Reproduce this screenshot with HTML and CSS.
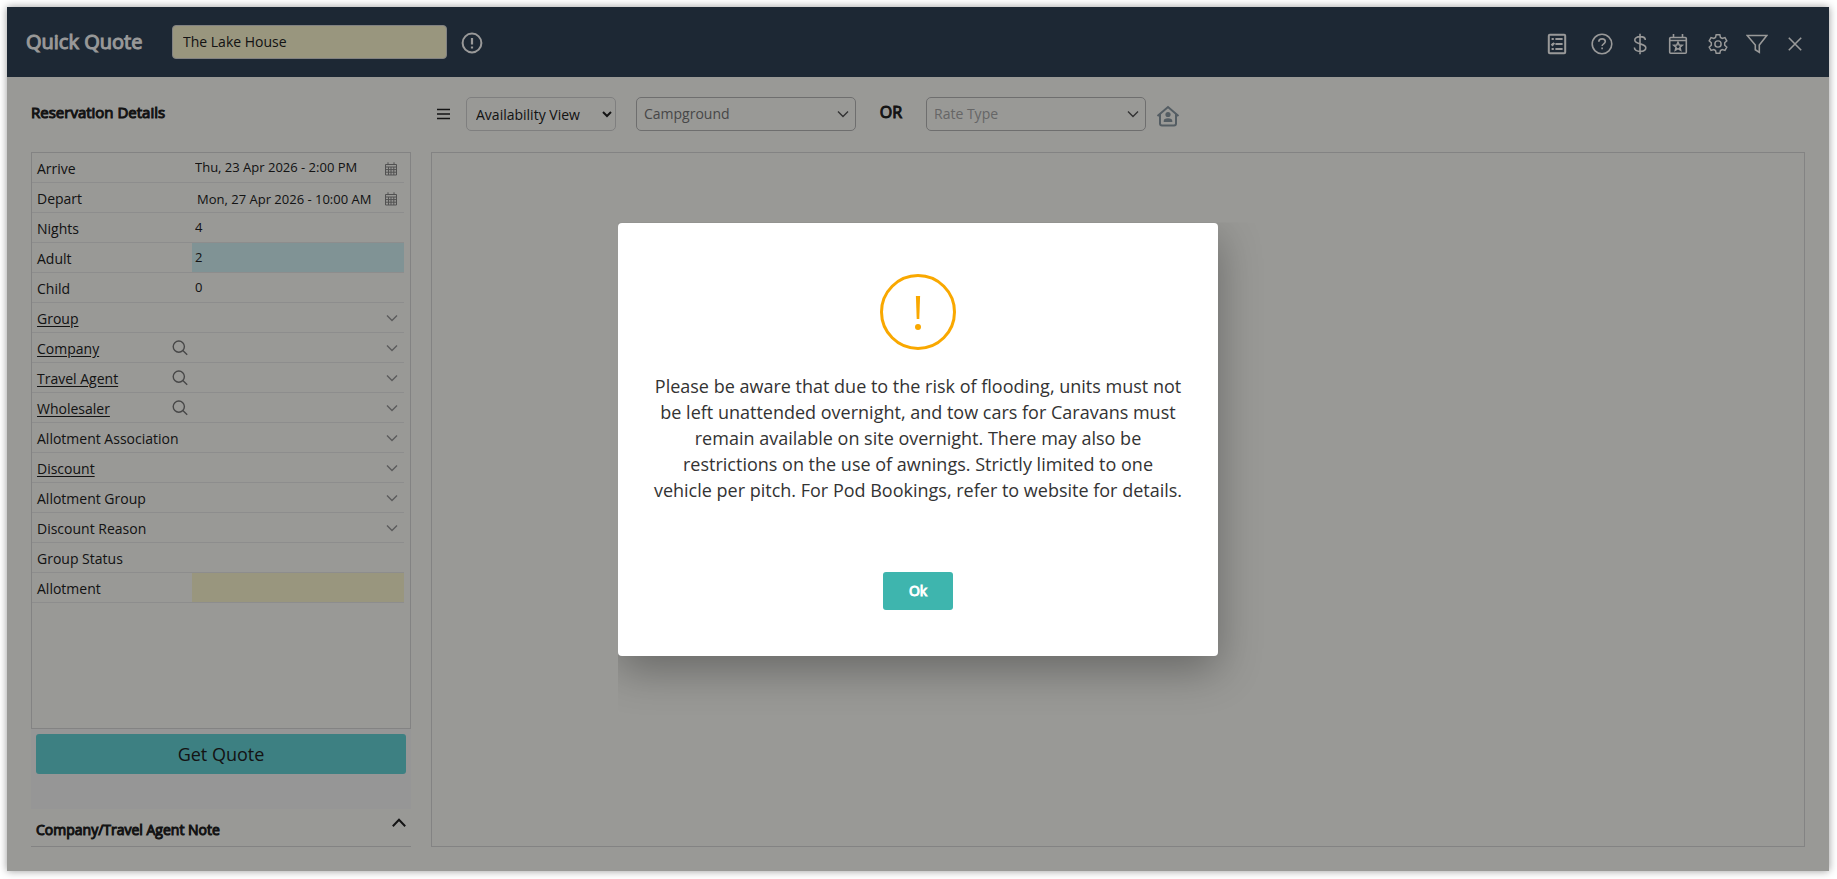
FILE: index.html
```html
<!DOCTYPE html>
<html lang="en">
<head>
    <meta charset="utf-8">
    <title>Quick Quote</title>
    <link rel="stylesheet" href="styles.css">
</head>
<body>

<!-- shared icons -->
<svg class="sprite" aria-hidden="true">
    <symbol id="i-down" viewBox="0 0 12 12"><path d="M1 3.5l5 5 5-5"/></symbol>
    <symbol id="i-search" viewBox="0 0 16 16"><circle cx="6.8" cy="6.6" r="5.6"/><path d="M10.8 10.6l4.4 4.2"/></symbol>
    <symbol id="i-cal" viewBox="0 0 14 14"><path d="M1.5 2.5h11v10.5h-11zM1.5 5h11M1.5 7.6h11M1.5 10.2h11M4.5 5v8M7 5v8M9.8 5v8M4 .3v2.4M10 .3v2.4"/></symbol>
</svg>

<div class="app">
    <header class="topbar">
        <h1>Quick Quote</h1>
        <input class="property" type="text" value="The Lake House" aria-label="Property">
        <button class="icon-btn notice" aria-label="Property notice">
            <svg width="22" height="22" viewBox="0 0 22 22"><circle cx="11" cy="11" r="9.4" stroke-width="2"/><path d="M11 6v6.4M11 14.4v2" stroke-width="2.2"/></svg>
        </button>
        <nav class="tools">
            <button class="icon-btn list" aria-label="List">
                <svg width="20" height="22" viewBox="0 0 20 22"><rect x="1.8" y="1.8" width="16.4" height="18.4" rx="1" stroke-width="2"/><path d="M4.6 6h2.2M8.4 6h7.2M8.4 11h7.2M4.4 11l1.1 1 1.8-2.2M4.6 16h2.2M8.4 16h7.2" stroke-width="2"/></svg>
            </button>
            <button class="icon-btn" aria-label="Help">
                <svg width="22" height="22" viewBox="0 0 22 22"><circle cx="11" cy="11" r="9.8"/><path d="M7.8 8.8c0-1.8 1.4-2.9 3.3-2.900s3.200 1.100 3.200 2.700c0 2.300-3.200 2.200-3.200 4.500M11.100 14.600v1.600"/></svg>
            </button>
            <button class="icon-btn narrow" aria-label="Rates">
                <svg width="14" height="22" viewBox="0 0 14 22"><path d="M12.300 7c0-2-1.800-3.400-5.100-3.400S1.800 5.100 1.800 7c0 5 11 2.800 11 7.800 0 2.200-2.200 3.600-5.600 3.600s-5.800-1.400-5.800-3.800M7 .8v20.400"/></svg>
            </button>
            <button class="icon-btn wide" aria-label="Calendar">
                <svg width="20" height="22" viewBox="0 0 20 22"><rect x="1.700" y="4.500" width="16.600" height="15.800" rx="1"/><path d="M1.700 7.500h16.600M5.500 1v3.500M14.500 1v3.500"/><path d="M10 9.300l1.200 2.700 2.900.3-2.200 1.900.7 2.900-2.600-1.500-2.600 1.500.7-2.900-2.200-1.900 2.900-.3z"/></svg>
            </button>
            <button class="icon-btn wide" aria-label="Settings">
                <svg width="22" height="22" viewBox="0 0 24 24"><circle cx="12" cy="12" r="3.400"/><path d="M10 1.800h4l.7 3.100 1.900 1.100 3-1 2 3.500-2.300 2.100v2.800l2.300 2.100-2 3.500-3-1-1.900 1.100-.7 3.100h-4l-.7-3.100-1.900-1.100-3 1-2-3.500 2.300-2.100v-2.800L2.400 8.500l2-3.500 3 1 1.900-1.100z"/></svg>
            </button>
            <button class="icon-btn" aria-label="Filter">
                <svg width="22" height="22" viewBox="0 0 22 22"><path d="M1.200 2.500h19.600L13.300 12v7.300l-4-2.600V12z"/></svg>
            </button>
            <button class="icon-btn narrow" aria-label="Close">
                <svg width="14" height="14" viewBox="0 0 14 14"><path d="M.8.800l12.400 12.400M13.200.800L.8 13.200"/></svg>
            </button>
        </nav>
    </header>

    <main class="content">
        <aside class="sidebar">
            <h2 class="section-title">Reservation Details</h2>
            <div class="details">
                <div class="row">
                    <label for="arrive">Arrive</label>
                    <input id="arrive" type="text" value="Thu, 23 Apr 2026 - 2:00 PM">
                    <svg class="cal"><use href="#i-cal"/></svg>
                </div>
                <div class="row">
                    <label for="depart">Depart</label>
                    <input id="depart" class="depart" type="text" value="Mon, 27 Apr 2026 - 10:00 AM">
                    <svg class="cal"><use href="#i-cal"/></svg>
                </div>
                <div class="row">
                    <label for="nights">Nights</label>
                    <input id="nights" type="text" value="4">
                </div>
                <div class="row">
                    <label for="adult">Adult</label>
                    <input id="adult" class="active" type="text" value="2">
                </div>
                <div class="row">
                    <label for="child">Child</label>
                    <input id="child" type="text" value="0">
                </div>
                <div class="row">
                    <a href="#">Group</a>
                    <input type="text" aria-label="Group">
                    <svg class="down"><use href="#i-down"/></svg>
                </div>
                <div class="row">
                    <a href="#">Company</a>
                    <svg class="search"><use href="#i-search"/></svg>
                    <input type="text" aria-label="Company">
                    <svg class="down"><use href="#i-down"/></svg>
                </div>
                <div class="row">
                    <a href="#">Travel Agent</a>
                    <svg class="search"><use href="#i-search"/></svg>
                    <input type="text" aria-label="Travel Agent">
                    <svg class="down"><use href="#i-down"/></svg>
                </div>
                <div class="row">
                    <a href="#">Wholesaler</a>
                    <svg class="search"><use href="#i-search"/></svg>
                    <input type="text" aria-label="Wholesaler">
                    <svg class="down"><use href="#i-down"/></svg>
                </div>
                <div class="row">
                    <label for="association">Allotment Association</label>
                    <input id="association" type="text">
                    <svg class="down"><use href="#i-down"/></svg>
                </div>
                <div class="row">
                    <a href="#">Discount</a>
                    <input type="text" aria-label="Discount">
                    <svg class="down"><use href="#i-down"/></svg>
                </div>
                <div class="row">
                    <label for="allotment-group">Allotment Group</label>
                    <input id="allotment-group" type="text">
                    <svg class="down"><use href="#i-down"/></svg>
                </div>
                <div class="row">
                    <label for="reason">Discount Reason</label>
                    <input id="reason" type="text">
                    <svg class="down"><use href="#i-down"/></svg>
                </div>
                <div class="row">
                    <label for="status">Group Status</label>
                    <input id="status" type="text">
                </div>
                <div class="row">
                    <label for="allotment">Allotment</label>
                    <input id="allotment" class="required" type="text">
                </div>
            </div>
            <div class="actions">
                <button class="quote-btn">Get Quote</button>
            </div>
            <div class="note">
                <h2>Company/Travel Agent Note</h2>
                <svg width="14" height="10" viewBox="0 0 14 10"><path d="M.8 8.200L7 1.800l6.200 6.400"/></svg>
            </div>
        </aside>

        <section class="main-area">
            <div class="toolbar">
                <button class="icon-btn menu" aria-label="Menu">
                    <svg width="13" height="12" viewBox="0 0 13 12"><path d="M0 1.500h13M0 6h13M0 10.500h13"/></svg>
                </button>
                <select class="view" aria-label="View">
                    <option>Availability View</option>
                </select>
                <div class="combo">
                    <input class="filled" type="text" placeholder="Campground" aria-label="Campground">
                    <svg class="down"><use href="#i-down"/></svg>
                </div>
                <span class="or">OR</span>
                <div class="combo">
                    <input type="text" placeholder="Rate Type" aria-label="Rate Type">
                    <svg class="down"><use href="#i-down"/></svg>
                </div>
                <button class="icon-btn home" aria-label="Owner occupied">
                    <svg width="24" height="22" viewBox="0 0 24 22"><path d="M1.500 11L12 2l10.500 9M4 9.500V18.500q0 2 2 2h12q2 0 2-2V9.500"/><circle class="fill" cx="12" cy="9.500" r="2.600"/><path class="fill" d="M7.700 17v-1q0-2.700 4.300-2.700t4.300 2.700v1z"/></svg>
                </button>
            </div>
            <div class="board"></div>
        </section>
    </main>

    <div class="overlay">
        <div class="dialog" role="alertdialog" aria-modal="true" aria-describedby="message">
            <svg class="warning" width="76" height="76" viewBox="0 0 76 76"><circle cx="38" cy="38" r="36.500"/><path d="M35.900 22h4.200l-.8 23h-2.600z"/><circle class="dot" cx="38" cy="53" r="3"/></svg>
            <p id="message">Please be aware that due to the risk of flooding, units must not be left unattended overnight, and tow cars for Caravans must remain available on site overnight. There may also be restrictions on the use of awnings. Strictly limited to one vehicle per pitch. For Pod Bookings, refer to website for details.</p>
            <button class="ok-btn">Ok</button>
        </div>
    </div>
</div>

</body>
</html>
```
FILE: styles.css
```css
* { box-sizing: border-box; }
body {
    margin: 0;
    padding: 7px 8px 8px 7px;
    height: 100vh;
    overflow: hidden;
    background: #fff;
    color: #222;
    font-family: 'Open Sans', sans-serif;
    font-size: 14px;
}
h1, h2, p { margin: 0; }
input, button, select {
    font-family: inherit;
    font-size: 14px;
    color: inherit;
}
svg {
    display: block;
    fill: none;
    stroke: currentColor;
}
.sprite { position: absolute; width: 0; height: 0; }
.app {
    position: relative;
    display: flex;
    flex-direction: column;
    height: 100%;
    background: #fffffb;
    box-shadow: 0 0 8px rgba(0, 0, 0, 0.4);
}

/* header */
.topbar {
    display: flex;
    align-items: center;
    height: 70px;
    padding: 0 23px 0 19px;
    background: #314457;
    color: #fff;
}
.topbar h1 {
    width: 146px;
    font-size: 20px;
    font-weight: normal;
    line-height: 28px;
    -webkit-text-stroke: 1px;
}
.property {
    width: 275px;
    height: 34px;
    margin-right: 13px;
    padding: 0 10px 2px;
    border: 1px solid #d8d8d8;
    border-radius: 4px;
    background: #fffad2;
    color: #222;
}
.icon-btn {
    display: flex;
    align-items: center;
    justify-content: center;
    width: 24px;
    height: 24px;
    padding: 0;
    border: none;
    background: none;
    cursor: pointer;
}
.notice { padding-top: 2px; }
.tools {
    display: flex;
    align-items: center;
    gap: 14px;
    margin-left: auto;
    padding-top: 4px;
}
.tools svg { stroke-width: 1.6; }
.icon-btn.list { margin-right: 7px; }
.icon-btn.narrow { width: 23px; }
.icon-btn.wide { width: 26px; }

/* content */
.content {
    flex: 1;
    display: grid;
    grid-template-columns: 380px 1fr;
    gap: 20px;
    padding: 0 24px 24px;
    min-height: 0;
}
.sidebar, .main-area {
    display: flex;
    flex-direction: column;
}
.section-title, .note h2 {
    font-size: 14px;
    font-weight: normal;
    -webkit-text-stroke: 1px;
}
.section-title {
    height: 75px;
    font-size: 15px;
    line-height: 71px;
}
.details {
    flex: 1;
    padding-right: 6px;
    border: 1px solid #dadada;
}
.row {
    display: flex;
    align-items: center;
    position: relative;
    height: 30px;
    border-bottom: 1px solid #ececec;
}
.row label, .row a {
    flex: 1;
    padding: 1px 0 0 5px;
    color: inherit;
}
.row a { text-underline-offset: 2px; }
.row input {
    width: 212px;
    height: 29px;
    padding: 0 3px 1px;
    border: none;
    background: none;
    font-size: 13px;
}
.row .depart { padding: 3px 5px 0; }
.row .active { background: #d5f5f8; }
.row .required { background: #fffad2; }
.search {
    width: 16px;
    height: 16px;
    margin-right: 4px;
    color: #777;
    stroke-width: 1.4;
}
.down {
    position: absolute;
    right: 6px;
    width: 12px;
    height: 12px;
    color: #999;
    stroke-width: 1.4;
}
.cal {
    position: absolute;
    right: 6px;
    bottom: 6px;
    width: 14px;
    height: 14px;
    color: #888;
}
.actions {
    height: 80px;
    padding: 5px;
    background: #fafafa;
}
.quote-btn {
    width: 100%;
    height: 40px;
    border: none;
    border-radius: 3px;
    background: #67d5d9;
    font-size: 18px;
}
.note {
    display: flex;
    justify-content: space-between;
    height: 38px;
    padding: 9px 5px 0;
    border-bottom: 1px solid #dadada;
}
.note h2 { line-height: 24px; }
.note svg { stroke-width: 2; }

/* toolbar */
.toolbar {
    display: flex;
    align-items: center;
    height: 75px;
    padding-bottom: 1px;
}
.menu { width: 35px; padding-right: 10px; }
.menu svg { stroke-width: 1.6; }
.view {
    width: 150px;
    height: 34px;
    margin-right: 20px;
    padding: 0 0 0 5px;
    border: 1px solid #d4d4d4;
    border-radius: 5px;
    background: none;
}
.combo {
    display: flex;
    align-items: center;
    position: relative;
}
.combo input {
    width: 220px;
    height: 34px;
    padding: 0 30px 2px 7px;
    border: 1px solid #b8b8b8;
    border-radius: 5px;
    background: none;
}
.combo input::placeholder { color: #aaa; }
.combo .filled::placeholder { color: #777; }
.combo .down { right: 7px; color: #555; }
.or {
    width: 70px;
    padding-bottom: 4px;
    font-size: 16px;
    text-align: center;
    -webkit-text-stroke: 1px;
}
.home { margin: 3px 0 0 10px; color: #8c9ba5; }
.home svg { stroke-width: 2; }
.home .fill { fill: currentColor; stroke: none; }
.board {
    flex: 1;
    border: 1px solid #dadada;
}

/* dialog */
.overlay {
    position: absolute;
    inset: 0;
    display: flex;
    align-items: center;
    justify-content: center;
    background: rgba(0, 0, 0, 0.4);
}
.dialog {
    display: flex;
    flex-direction: column;
    align-items: center;
    width: 600px;
    padding: 51px 35px 46px;
    border-radius: 4px;
    background: #fff;
    box-shadow: 0 14px 44px rgba(0, 0, 0, 0.32);
    clip-path: inset(0 -60px -60px 0);
}
.warning {
    color: #f9a800;
    stroke-width: 3;
}
.warning path, .warning .dot {
    fill: currentColor;
    stroke: none;
}
.dialog p {
    margin: 23px 0 69px;
    color: #333;
    font-size: 18px;
    line-height: 26px;
    text-align: center;
}
.ok-btn {
    width: 70px;
    height: 38px;
    border: none;
    border-radius: 3px;
    background: #3eb5ae;
    color: #fff;
    -webkit-text-stroke: 1px;
}
```
